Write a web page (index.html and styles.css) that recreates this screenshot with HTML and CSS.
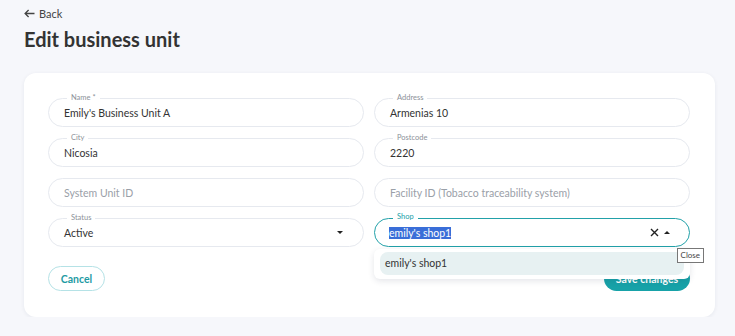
FILE: index.html
```html
<!DOCTYPE html>
<html lang="en">
<head>
  <meta charset="UTF-8">
  <meta name="viewport" content="width=device-width, initial-scale=1.0">
  <title>Edit business unit</title>
  <link rel="stylesheet" href="styles.css">
</head>
<body>
  <a class="back-link" href="#">
    <svg width="11" height="9" viewBox="0 0 11 9"><path d="M10.5 4.5H1.2M4.6 1L1.1 4.5 4.6 8" fill="none" stroke="#444" stroke-width="1.3"/></svg>
    Back
  </a>
  <h1>Edit business unit</h1>

  <div class="card">
    <div class="form-grid">
      <div class="field">
        <span class="field-label">Name *</span>
        <div class="field-value">Emily's Business Unit A</div>
      </div>
      <div class="field">
        <span class="field-label">Address</span>
        <div class="field-value">Armenias 10</div>
      </div>
      <div class="field">
        <span class="field-label">City</span>
        <div class="field-value">Nicosia</div>
      </div>
      <div class="field">
        <span class="field-label">Postcode</span>
        <div class="field-value">2220</div>
      </div>
      <div class="field">
        <div class="field-value placeholder">System Unit ID</div>
      </div>
      <div class="field">
        <div class="field-value placeholder">Facility ID (Tobacco traceability system)</div>
      </div>
      <div class="field">
        <span class="field-label">Status</span>
        <div class="field-value">Active</div>
        <span class="caret down"></span>
      </div>
      <div class="field focused">
        <span class="field-label">Shop</span>
        <div class="field-value"><span class="selected-text">emily's shop1</span></div>
        <svg class="clear-icon" width="9" height="9" viewBox="0 0 9 9"><path d="M1 1L8 8M8 1L1 8" stroke="#222" stroke-width="1.4"/></svg>
        <span class="caret up"></span>
        <div class="dropdown">
          <div class="option">emily's shop1</div>
        </div>
        <div class="tooltip">Close</div>
      </div>
    </div>

    <div class="actions">
      <button class="btn btn-outline">Cancel</button>
      <button class="btn btn-primary">Save changes</button>
    </div>
  </div>
</body>
</html>
```

FILE: styles.css
```css
body {
  margin: 0;
  padding: 7px 20px 0 24px;
  background-color: #f6f7fb;
  font-family: Lato, "Open Sans", sans-serif;
  color: #333;
}
.back-link {
  display: flex;
  align-items: center;
  gap: 4px;
  height: 13px;
  font-size: 11px;
  color: #444;
  text-decoration: none;
}
h1 {
  margin: 5px 0 0;
  font-size: 20px;
  line-height: 28px;
  font-weight: 700;
  color: #333;
}
.card {
  margin-top: 20px;
  width: 691px;
  box-sizing: border-box;
  padding: 25px 25px 26px 24px;
  background: #fff;
  border-radius: 12px;
  box-shadow: 0 1px 4px rgba(30, 40, 70, 0.07);
}
.form-grid {
  display: grid;
  grid-template-columns: 1fr 1fr;
  column-gap: 10px;
  row-gap: 11px;
}
.field {
  position: relative;
  height: 29px;
  border: 1px solid #e6e9ef;
  border-radius: 15px;
  box-sizing: border-box;
  display: flex;
  align-items: center;
  padding: 0 15px;
}
.field-value {
  flex: 1;
  font-size: 10.5px;
}
.field-value.placeholder {
  color: #9aa0a8;
}
.field-label {
  position: absolute;
  top: -6px;
  left: 18px;
  padding: 0 4px;
  background: #fff;
  font-size: 7.5px;
  line-height: 9px;
  color: #8c9199;
}
.field.focused {
  border: 1.5px solid #22a1a9;
  padding-left: 14px;
}
.field.focused .field-label {
  color: #22a1a9;
  top: -7px;
}
.selected-text {
  background: #3a6ed8;
  color: #fff;
}
.caret {
  width: 0;
  height: 0;
  border-left: 3px solid transparent;
  border-right: 3px solid transparent;
  margin-right: 5px;
}
.caret.down {
  border-top: 3px solid #222;
}
.caret.up {
  border-bottom: 3px solid #222;
  margin-left: 5px;
  margin-right: 4px;
}
.dropdown {
  position: absolute;
  top: 30px;
  left: -1px;
  right: -1px;
  padding: 3px 6px 4px;
  background: #fff;
  border-radius: 6px;
  box-shadow: 0 2px 6px rgba(30, 40, 70, 0.12);
  z-index: 2;
}
.option {
  height: 23px;
  line-height: 23px;
  padding-left: 5px;
  border-radius: 8px;
  background: #e7f1f2;
  font-size: 10.5px;
  color: #333;
}
.tooltip {
  position: absolute;
  top: 29px;
  right: -15px;
  padding: 1px 3px;
  background: #fff;
  border: 1px solid #777;
  font-size: 8px;
  line-height: 11px;
  color: #444;
  z-index: 3;
}
.actions {
  display: flex;
  justify-content: space-between;
  margin-top: 19px;
}
.btn {
  height: 25px;
  border-radius: 13px;
  font-family: Lato, "Open Sans", sans-serif;
  font-size: 10.5px;
  font-weight: 700;
  cursor: pointer;
}
.btn-outline {
  width: 57px;
  background: #fff;
  border: 1px solid #b5e2e6;
  color: #1f9ba4;
}
.btn-primary {
  width: 86px;
  background: #17a2a8;
  border: none;
  color: #fff;
}
```
